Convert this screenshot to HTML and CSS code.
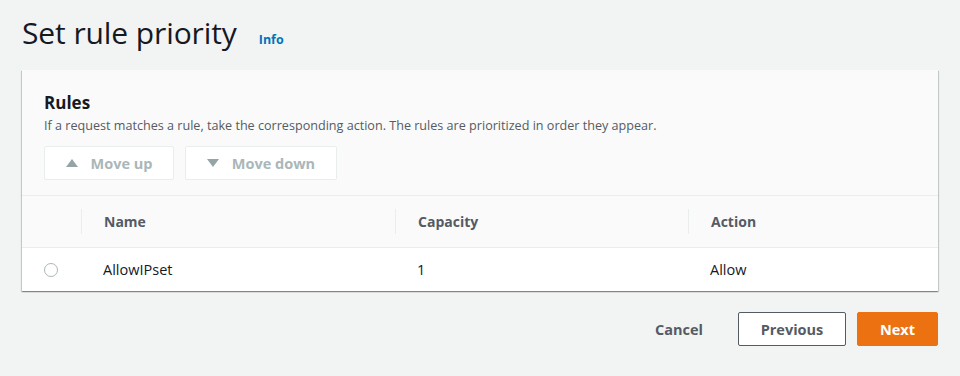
FILE: index.html
```html
<!DOCTYPE html>
<html lang="en">
<head>
    <meta charset="UTF-8">
    <title>Set rule priority</title>
    <link rel="stylesheet" href="styles.css">
</head>
<body>
    <div class="page">
        <div class="page-header">
            <h1>Set rule priority</h1>
            <a class="info-link" href="#">Info</a>
        </div>

        <div class="panel">
            <div class="panel-header">
                <h2>Rules</h2>
                <p class="panel-desc">If a request matches a rule, take the corresponding action. The rules are prioritized in order they appear.</p>
                <div class="move-buttons">
                    <button type="button" class="btn btn-disabled btn-up"><span class="caret caret-up"></span>Move up</button>
                    <button type="button" class="btn btn-disabled btn-down"><span class="caret caret-down"></span>Move down</button>
                </div>
            </div>

            <table class="rules-table">
                <thead>
                    <tr>
                        <th class="col-select"></th>
                        <th class="col-name"><span>Name</span></th>
                        <th class="col-capacity"><span>Capacity</span></th>
                        <th class="col-action"><span>Action</span></th>
                    </tr>
                </thead>
                <tbody>
                    <tr>
                        <td class="col-select"><span class="radio"></span></td>
                        <td>AllowIPset</td>
                        <td>1</td>
                        <td>Allow</td>
                    </tr>
                </tbody>
            </table>
        </div>

        <div class="form-actions">
            <a class="btn-link" href="#">Cancel</a>
            <button type="button" class="btn btn-normal">Previous</button>
            <button type="button" class="btn btn-primary">Next</button>
        </div>
    </div>
</body>
</html>
```

FILE: styles.css
```css
:root {
    --bg-color: #f2f3f3;
    --text-color: #16191f;
    --muted-color: #545b64;
    --disabled-color: #aab7b8;
    --border-color: #eaeded;
    --accent-color: #ec7211;
    --link-color: #0073bb;
}

body {
    margin: 0;
    background: var(--bg-color);
    font-family: 'Open Sans', 'Noto Sans', sans-serif;
    color: var(--text-color);
}

.page {
    padding: 0 22px 0 21px;
}

.page-header {
    display: flex;
    align-items: baseline;
    height: 70px;
}

h1 {
    margin: 12px 0 0 1px;
    font-size: 30px;
    font-weight: 400;
    letter-spacing: -0.1px;
}

.info-link {
    margin-left: 22px;
    font-size: 12.5px;
    font-weight: 700;
    color: var(--link-color);
    text-decoration: none;
}

.panel {
    background: #fff;
    margin-left: 1px;
    box-shadow: 0 1px 1px 0 rgba(0, 28, 36, 0.3), 1px 1px 1px 0 rgba(0, 28, 36, 0.15), -1px 1px 1px 0 rgba(0, 28, 36, 0.15);
}

.panel-header {
    background: #fafafa;
    padding: 22px 22px 15px;
    border-bottom: 1px solid var(--border-color);
}

h2 {
    margin: 0;
    font-size: 17px;
    font-weight: 700;
    line-height: 22px;
}

.panel-desc {
    margin: 4px 0 12px;
    font-size: 12.6px;
    line-height: 16px;
    color: var(--muted-color);
}

.move-buttons {
    display: flex;
    gap: 11px;
}

.btn {
    font-family: inherit;
    font-size: 14.5px;
    font-weight: 700;
    height: 34px;
    padding: 0 20px;
    border-radius: 2px;
    cursor: pointer;
    display: inline-flex;
    align-items: center;
    justify-content: center;
}

.btn-disabled {
    background: #fff;
    border: 1px solid var(--border-color);
    color: var(--disabled-color);
    cursor: default;
}

.btn-up {
    width: 130px;
}

.btn-down {
    width: 152px;
}

.caret {
    width: 0;
    height: 0;
    border-left: 6px solid transparent;
    border-right: 6px solid transparent;
    margin-right: 13px;
}

.caret-up {
    border-bottom: 8px solid #95a5a6;
}

.caret-down {
    border-top: 8px solid #95a5a6;
}

.rules-table {
    width: 100%;
    border-collapse: collapse;
    font-size: 14.5px;
}

.rules-table th {
    background: #fafafa;
    height: 51px;
    padding: 0;
    text-align: left;
    font-size: 14px;
    font-weight: 700;
    color: var(--muted-color);
    border-bottom: 1px solid var(--border-color);
}

.rules-table th span {
    display: block;
    border-left: 1px solid var(--border-color);
    padding: 4px 22px 4px 22px;
    line-height: 17px;
}

.rules-table td {
    height: 43px;
    padding: 0 0 0 22px;
    color: var(--text-color);
}

.rules-table .col-select {
    width: 37px;
}

.col-name {
    width: 314px;
}

.col-capacity {
    width: 293px;
}

.radio {
    display: block;
    width: 12px;
    height: 12px;
    border: 1px solid #aab7b8;
    border-radius: 50%;
    background: #fff;
}

.form-actions {
    display: flex;
    justify-content: flex-end;
    align-items: center;
    margin-top: 21px;
    gap: 11px;
}

.btn-link {
    font-size: 14.5px;
    font-weight: 700;
    color: var(--muted-color);
    text-decoration: none;
    margin-right: 24px;
}

.btn-normal {
    background: #fff;
    border: 1px solid #545b64;
    color: var(--muted-color);
    width: 108px;
}

.btn-primary {
    background: var(--accent-color);
    border: 1px solid var(--accent-color);
    color: #fff;
    width: 81px;
}
```
